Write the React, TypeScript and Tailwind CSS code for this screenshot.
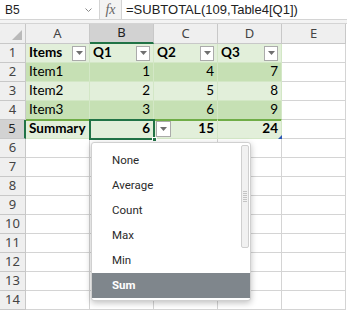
import React from 'react'

const cols = ['A', 'B', 'C', 'D', 'E']

type Cell = { v: string; right?: boolean; bold?: boolean; filter?: boolean }

const table: Cell[][] = [
  [
    { v: 'Items', bold: true, filter: true },
    { v: 'Q1', bold: true, filter: true },
    { v: 'Q2', bold: true, filter: true },
    { v: 'Q3', bold: true, filter: true },
  ],
  [{ v: 'Item1' }, { v: '1', right: true }, { v: '4', right: true }, { v: '7', right: true }],
  [{ v: 'Item2' }, { v: '2', right: true }, { v: '5', right: true }, { v: '8', right: true }],
  [{ v: 'Item3' }, { v: '3', right: true }, { v: '6', right: true }, { v: '9', right: true }],
  [
    { v: 'Summary', bold: true },
    { v: '6', right: true, bold: true },
    { v: '15', right: true, bold: true },
    { v: '24', right: true, bold: true },
  ],
]

const menuItems = ['None', 'Average', 'Count', 'Max', 'Min', 'Sum']

const FilterBox = () => (
  <div className="flex h-[15px] w-[14px] shrink-0 items-center justify-center border border-[#ababab] bg-white">
    <svg width="7" height="4" viewBox="0 0 7 4">
      <path d="M0 0h7L3.5 4z" fill="#6f6f6f" />
    </svg>
  </div>
)

const rowBg = ['bg-[#e2efda]', 'bg-[#c6e0b4]', 'bg-[#e2efda]', 'bg-[#c6e0b4]', 'bg-[#e2efda]']

export default function App() {
  const rows = Array.from({ length: 14 }, (_, i) => i + 1)
  return (
    <div className="relative h-[311px] w-[347px] overflow-hidden bg-white" style={{ fontFamily: '"Noto Sans", sans-serif' }}>
      {/* formula bar */}
      <div className="flex h-[20px] border-b border-[#d4d4d4] bg-white">
        <div className="flex w-[100px] items-center justify-between border-r border-[#d4d4d4] pl-[5px] pr-[7px] text-[12px] text-[#222]" style={{ fontFamily: '"Liberation Sans", sans-serif' }}>
          <span>B5</span>
          <svg width="7" height="4" viewBox="0 0 7 4">
            <path d="M0.5 0.5l3 3 3-3" stroke="#8a8a8a" fill="none" />
          </svg>
        </div>
        <div className="flex w-[22px] items-center justify-center border-r border-[#d4d4d4] bg-[#f3f3f3] text-[14px] italic text-[#666]" style={{ fontFamily: '"Liberation Serif", serif' }}>
          fx
        </div>
        <div className="flex items-center pl-[4px] text-[13px] text-[#222]" style={{ fontFamily: '"Liberation Sans", sans-serif' }}>
          =SUBTOTAL(109,Table4[Q1])
        </div>
      </div>
      <div className="h-[4px] border-b border-[#d4d4d4] bg-[#f3f3f3]" />

      {/* grid */}
      <div className="grid grid-cols-[26px_repeat(5,64px)] grid-rows-[20px_repeat(14,19px)]">
        <div className="relative border-b border-r border-[#c8c8c8] bg-[#efefef]">
          <svg className="absolute bottom-[3px] right-[3px]" width="10" height="10" viewBox="0 0 10 10">
            <path d="M10 0v10H0z" fill="#b9b9b9" />
          </svg>
        </div>
        {cols.map((c) => (
          <div
            key={c}
            className={`flex items-center justify-center border-r border-[#c8c8c8] text-[13px] ${
              c === 'B' ? 'border-b-2 border-b-[#217346] bg-[#d2d2d2] text-[#222]' : 'border-b border-b-[#c8c8c8] bg-[#efefef] text-[#444]'
            }`}
          >
            {c}
          </div>
        ))}
        {rows.map((r) => (
          <React.Fragment key={r}>
            <div
              className={`flex items-center justify-center border-b border-[#c8c8c8] text-[13px] ${
                r === 5 ? 'border-r-2 border-r-[#217346] bg-[#d2d2d2] text-[#222]' : 'border-r border-r-[#c8c8c8] bg-[#efefef] text-[#444]'
              }`}
            >
              {r}
            </div>
            {cols.map((c, ci) => {
              const inTable = r <= 5 && ci < 4
              if (!inTable) {
                return <div key={c} className="border-b border-r border-[#d4d4d4]" />
              }
              const cell = table[r - 1][ci]
              return (
                <div
                  key={c}
                  className={`flex items-center border-r border-r-[#d3e7c6] px-[3px] text-[13.5px] leading-none text-black ${rowBg[r - 1]} ${
                    r === 4 ? 'border-b border-b-[#70ad47]' : 'border-b border-b-[#d3e7c6]'
                  } ${r === 5 ? 'shadow-[inset_0_1px_0_#70ad47]' : ''} ${cell.right ? 'justify-end' : 'justify-between'} ${
                    cell.bold ? 'font-bold' : ''
                  }`}
                  style={{ fontFamily: 'Lato, sans-serif' }}
                >
                  <span>{cell.v}</span>
                  {cell.filter && <FilterBox />}
                </div>
              )
            })}
          </React.Fragment>
        ))}
      </div>

      {/* selection B5 */}
      <div className="absolute left-[89px] top-[119px] h-[21px] w-[66px] border-2 border-[#217346]" />
      <div className="absolute left-[152px] top-[137px] h-[5px] w-[5px] border border-white bg-[#217346]" />
      {/* total row dropdown */}
      <div className="absolute left-[156px] top-[121px]">
        <div className="flex h-[16px] w-[15px] items-center justify-center border border-[#ababab] bg-white">
          <svg width="7" height="4" viewBox="0 0 7 4">
            <path d="M0 0h7L3.5 4z" fill="#6f6f6f" />
          </svg>
        </div>
      </div>
      {/* table resize handle */}
      <svg className="absolute left-[278px] top-[135px]" width="4" height="4" viewBox="0 0 4 4">
        <path d="M4 0v4H0z" fill="#2b57b5" />
      </svg>

      {/* dropdown menu */}
      <div className="absolute left-[91px] top-[142px] h-[159px] w-[160px] rounded-[3px] border border-[#d0d0d0] bg-white pt-[5px] shadow-[0_2px_6px_rgba(0,0,0,0.25)]" style={{ fontFamily: 'Roboto, sans-serif' }}>
        <div className="flex flex-col">
          {menuItems.map((m) => (
            <div
              key={m}
              className={`flex h-[25px] items-center pl-[20px] text-[11.5px] ${
                m === 'Sum' ? 'bg-[#7f868c] font-bold text-white' : 'text-[#2a2a2a]'
              }`}
            >
              {m}
            </div>
          ))}
        </div>
        <div className="absolute right-[1px] top-[2px] flex h-[103px] w-[8px] flex-col items-center justify-center gap-[1px] rounded-[2px] border border-[#cfcfcf] bg-[#f1f1f1]">
          {[0, 1, 2, 3, 4, 5].map((i) => (
            <div key={i} className="h-[1px] w-[4px] bg-[#c4c4c4]" />
          ))}
        </div>
      </div>
    </div>
  )
}
